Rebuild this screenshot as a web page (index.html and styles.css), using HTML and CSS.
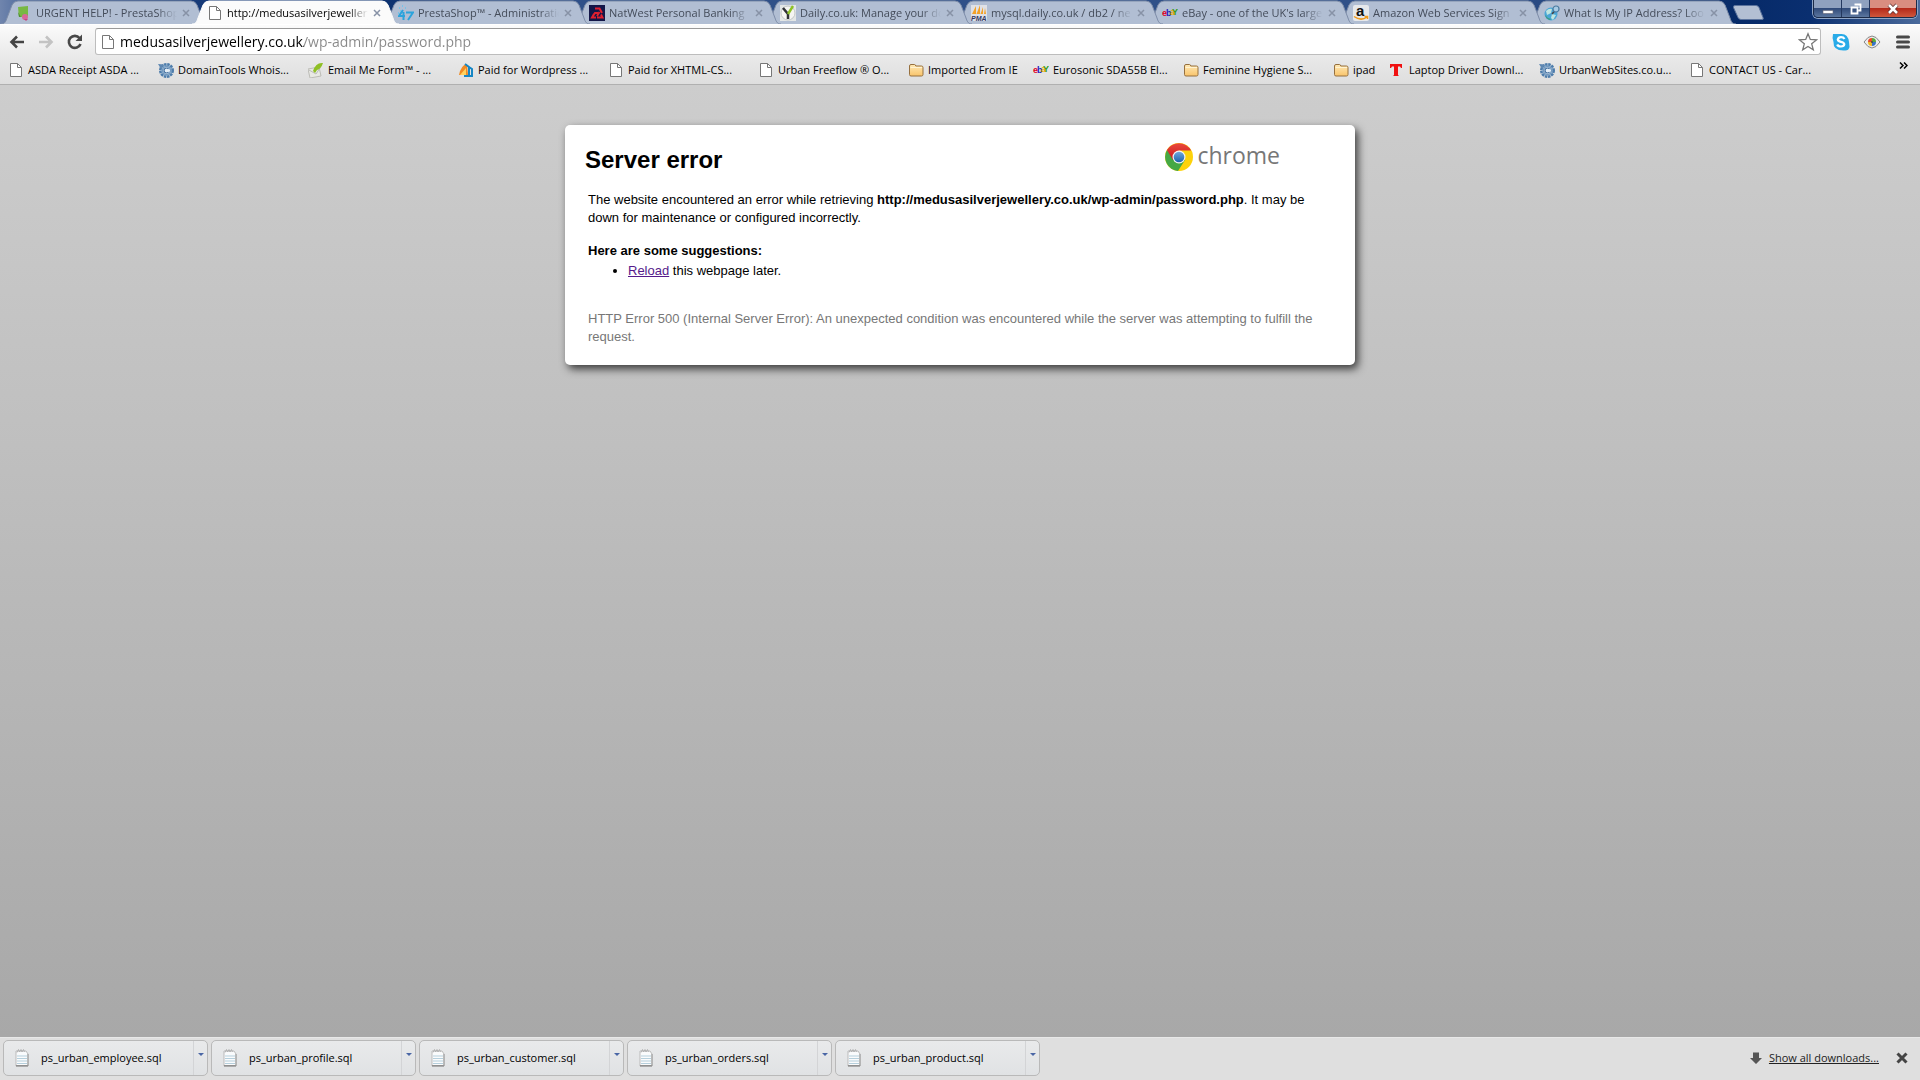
FILE: index.html
```html
<!DOCTYPE html>
<html lang="en">
<head>
<meta charset="utf-8">
<title>http://medusasilverjewellery.co.uk/wp-admin/password.php</title>
<link rel="stylesheet" href="styles.css">
</head>
<body>
<svg class="defs" aria-hidden="true">
  <defs>
    <linearGradient id="gFolder" x1="0" y1="0" x2="0" y2="1"><stop offset="0" stop-color="#ffe9b5"/><stop offset="1" stop-color="#f9c46b"/></linearGradient>
    <linearGradient id="gRed" x1="0" y1="0" x2="0" y2="1"><stop offset="0" stop-color="#ea4a3c"/><stop offset="1" stop-color="#c9151c"/></linearGradient>
    <linearGradient id="gBlue" x1="0" y1="0" x2="0" y2="1"><stop offset="0" stop-color="#6fa8dc"/><stop offset="1" stop-color="#1d62b0"/></linearGradient>
    <symbol id="tabShape" viewBox="0 0 207 24" preserveAspectRatio="none">
      <path d="M0 24C4 24 5 21 6 18L11 5Q13 1 17 1H190Q194 1 196 5L201 18C202 21 203 24 207 24" vector-effect="non-scaling-stroke"/>
    </symbol>
    <symbol id="page" viewBox="0 0 16 16"><path d="M2.5 1.5h7l4 4v9h-11z" fill="#fff" stroke="#777"/><path d="M9.500 1.500v4h4" fill="none" stroke="#777"/></symbol>
    <symbol id="folder" viewBox="0 0 16 16"><path d="M1.500 4Q1.500 2.500 3 2.500h3.500q1 0 1.300 1.500H13.500q1.500 0 1.500 1.500v7q0 1.500-1.500 1.500H3q-1.500 0-1.500-1.500z" fill="url(#gFolder)" stroke="#96703f"/><path d="M2.500 5.500h11.500" stroke="#fff3d2"/></symbol>
    <symbol id="gear" viewBox="0 0 16 16"><circle cx="8.500" cy="8.500" r="6" fill="#8fb0cf"/><circle cx="8.500" cy="8.500" r="6.300" fill="none" stroke="#4d7cab" stroke-width="2.400" stroke-dasharray="2.500 .8"/><circle cx="8.500" cy="8.500" r="4" fill="#e6eff7" stroke="#5b87b3"/><path d="M10.500 7a2.500 2.500 0 1 0 0 3" fill="none" stroke="#37679a" stroke-width="1.200"/><path d="M0 2l6 .5L3 7z" fill="#5e87b2"/></symbol>
    <symbol id="ebay" viewBox="0 0 16 16"><g font-family="Liberation Sans, sans-serif" font-weight="bold" font-size="9"><text x="0" y="11" fill="#e00020">e</text><text x="4" y="11" fill="#2222b8">b</text><text x="8" y="10" fill="#e8a800">a</text><text x="10" y="10" fill="#2f9a10">Y</text></g></symbol>
    <symbol id="notepad" viewBox="0 0 14 18"><path d="M1 2h10l2 3v12H1z" fill="#fafbfc" stroke="#bbb"/><path d="M2 7h10M2 9.500h10M2 12h10M2 14.500h10" stroke="#b5cfdc"/><path d="M1 16.800h12" stroke="#888" stroke-width="1.400"/><path d="M13 5v12" stroke="#999"/><path d="M2 3.500l1.500-3 1 2.500L6 .5 7 3l1.500-2.500 1 2.500" fill="none" stroke="#aaa" stroke-width=".8"/></symbol>
    <symbol id="x" viewBox="0 0 8 8"><path d="M1 1l6 6M7 1L1 7"/></symbol>
  </defs>
</svg>

<header class="chrome">
  <div class="titlebar">
    <nav class="tabs" aria-label="Tabs">
      <div class="tab t1"><svg class="shape"><use href="#tabShape"/></svg>
        <button class="title"><svg class="ico" viewBox="0 0 16 16"><path d="M2 2l10-1v10l-3 1H3z" fill="#78b843"/><path d="M2 7l3 5H3z" fill="#4f9230"/><circle cx="9" cy="12" r="3" fill="#d8669a"/><path d="M8 14h4l-2 2z" fill="#c8457f"/></svg><span>URGENT HELP! - PrestaShop</span></button>
        <button class="close" aria-label="Close tab"><svg><use href="#x"/></svg></button></div>
      <div class="tab active"><svg class="shape"><use href="#tabShape"/></svg>
        <button class="title"><svg class="ico"><use href="#page"/></svg><span>http://medusasilverjewellery</span></button>
        <button class="close" aria-label="Close tab"><svg><use href="#x"/></svg></button></div>
      <div class="tab t3"><svg class="shape"><use href="#tabShape"/></svg>
        <button class="title"><svg class="ico" viewBox="0 0 16 16"><path d="M5 5L1 11h6M5.500 7v8M8 7.500h7l-5 7.500" fill="none" stroke="#2ba3dc" stroke-width="2"/><path d="M1 3h1M4 1h1M7 3h1M2 6h1M0 8h1" stroke="#67c4ee" stroke-width="1.500"/></svg><span>PrestaShop™ - Administration</span></button>
        <button class="close" aria-label="Close tab"><svg><use href="#x"/></svg></button></div>
      <div class="tab t4"><svg class="shape"><use href="#tabShape"/></svg>
        <button class="title"><svg class="ico" viewBox="0 0 16 16"><path d="M0 0h16v16H0z" fill="#131648"/><path d="M6 3.500h4.500L13 8M10.500 7L8 11M3 12.500L6 8h3M12 9.500l1.500 3H8M5 9l-2 3.500h4" fill="none" stroke="#e0202f" stroke-width="2"/></svg><span>NatWest Personal Banking</span></button>
        <button class="close" aria-label="Close tab"><svg><use href="#x"/></svg></button></div>
      <div class="tab t5"><svg class="shape"><use href="#tabShape"/></svg>
        <button class="title"><svg class="ico" viewBox="0 0 16 16"><path d="M0 0h16v16H0z" fill="#e3e6e6"/><circle cx="8" cy="8" r="7" fill="#f5f5f2" stroke="#c2c7c7"/><path d="M3 3l5 6v5" fill="none" stroke="#303236" stroke-width="2.500"/><path d="M8 9l5-8" stroke="#8cc126" stroke-width="2.500"/></svg><span>Daily.co.uk: Manage your do</span></button>
        <button class="close" aria-label="Close tab"><svg><use href="#x"/></svg></button></div>
      <div class="tab t6"><svg class="shape"><use href="#tabShape"/></svg>
        <button class="title"><svg class="ico" viewBox="0 0 16 16"><path d="M0 0h16v16H0z" fill="#dfe1e6"/><path d="M5 1v8H1zM9 0v9H5.500zM12 2v7H9.500zM14 3l1 6h-2z" fill="#f3a128"/><text x="0" y="16" font-family="Liberation Sans, sans-serif" font-weight="bold" font-style="italic" font-size="7" fill="#333865">PMA</text></svg><span>mysql.daily.co.uk / db2 / ne</span></button>
        <button class="close" aria-label="Close tab"><svg><use href="#x"/></svg></button></div>
      <div class="tab t7"><svg class="shape"><use href="#tabShape"/></svg>
        <button class="title"><svg class="ico"><use href="#ebay"/></svg><span>eBay - one of the UK's large</span></button>
        <button class="close" aria-label="Close tab"><svg><use href="#x"/></svg></button></div>
      <div class="tab t8"><svg class="shape"><use href="#tabShape"/></svg>
        <button class="title"><svg class="ico" viewBox="0 0 16 16"><rect width="16" height="16" rx="2" fill="#e6e8eb"/><text x="3" y="11" font-family="Liberation Sans, sans-serif" font-weight="bold" font-size="15" fill="#111">a</text><path d="M1 11.500q7 5 13 .5M11.500 11.500h3v2.500" fill="none" stroke="#f09a1c" stroke-width="1.500"/></svg><span>Amazon Web Services Sign</span></button>
        <button class="close" aria-label="Close tab"><svg><use href="#x"/></svg></button></div>
      <div class="tab t9"><svg class="shape"><use href="#tabShape"/></svg>
        <button class="title"><svg class="ico" viewBox="0 0 16 16"><circle cx="7" cy="9" r="6.500" fill="#4aa6d6"/><path d="M2 6q3-3 6-2l-1 4-4 2zM8 9l4 1-3 5-2-2z" fill="#bfe5e0"/><path d="M1 10l3 3 3 1-1 1q-4-1-5-5z" fill="#3b9a78"/><path d="M8 9l2.500-3" stroke="#444" stroke-width="1.500"/><circle cx="12" cy="4" r="3" fill="#a9cbe4" stroke="#4b7ba0" stroke-width="1.200"/></svg><span>What Is My IP Address? Look</span></button>
        <button class="close" aria-label="Close tab"><svg><use href="#x"/></svg></button></div>
      <button class="newtab" aria-label="New tab"><svg viewBox="0 0 32 16"><path d="M3 .5h21q2 0 3 2l4 10q1 2-1 2H9q-2 0-3-2L1.500 2.500q-.5-2 1.500-2z" fill="#b3bfd3" stroke="#5b739d"/></svg></button>
    </nav>
    <div class="winctl">
      <button class="min" aria-label="Minimize"><svg viewBox="0 0 12 12"><path d="M1 7.500h10v3H1z" fill="#fff" stroke="#667" stroke-width=".6"/></svg></button>
      <button class="max" aria-label="Restore"><svg viewBox="0 0 12 12"><path d="M4.500 1.500h6v6h-2M1.500 4.500h6v6h-6z" fill="none" stroke="#fff" stroke-width="1.800"/></svg></button>
      <button class="exit" aria-label="Close"><svg viewBox="0 0 12 12"><path d="M2 2l8 8M10 2l-8 8" stroke="#5b2a2a" stroke-width="4"/><path d="M2 2l8 8M10 2l-8 8" stroke="#fff" stroke-width="2.600"/></svg></button>
    </div>
  </div>

  <div class="toolbar">
    <button class="tool" aria-label="Back"><svg viewBox="0 0 18 18"><path d="M16 9H4M9 3.500L3.500 9 9 14.500" fill="none" stroke="#444" stroke-width="2.600"/></svg></button>
    <button class="tool" aria-label="Forward"><svg viewBox="0 0 18 18"><path d="M2 9h12M9 3.500L14.500 9 9 14.500" fill="none" stroke="#c3c3c3" stroke-width="2.600"/></svg></button>
    <button class="tool" aria-label="Reload"><svg viewBox="0 0 18 18"><path d="M13.500 5A6 6 0 1 0 14.500 11" fill="none" stroke="#484848" stroke-width="2.600"/><path d="M16 1.500V8H9.500z" fill="#484848"/></svg></button>
    <div class="omnibox">
      <svg class="ico"><use href="#page"/></svg>
      <input type="text" aria-label="Address" value="medusasilverjewellery.co.uk/wp-admin/password.php">
      <button class="star" aria-label="Bookmark this page"><svg viewBox="0 0 20 20"><path d="M10 1.800l2.300 5.700 6.200.4-4.800 3.900 1.600 6L10 14.400l-5.300 3.400 1.600-6L1.500 7.900l6.200-.4z" fill="#fff" stroke="#777" stroke-width="1.300"/></svg></button>
    </div>
    <div class="ext">
      <button class="tool" aria-label="Skype"><svg viewBox="0 0 18 18"><path d="M1 1h7q8-1 9 8l.5 5q-1 4-5 3.500Q1 18 1.500 9 0 4 1 1z" fill="#29abe8"/><path d="M12.500 6Q11.500 4.200 9 4.200T5.800 6.500Q6 8.200 9 8.800t3.300 2.400Q12 13.500 9 13.500T5.200 11.500" fill="none" stroke="#fff" stroke-width="2.200"/></svg></button>
      <button class="tool" aria-label="Eye"><svg viewBox="0 0 18 18"><path d="M1 9q8-12 16 0-8 12-16 0z" fill="#ececec" stroke="#888"/><path d="M9 9V5a4 4 0 0 0-4 4z" fill="#e94b2b"/><path d="M9 9h4a4 4 0 0 0-4-4z" fill="#58a83a"/><path d="M9 9v4a4 4 0 0 0 4-4z" fill="#3a73c7"/><path d="M9 9H5a4 4 0 0 0 4 4z" fill="#efb820"/><circle cx="9" cy="9" r="1" fill="#444"/></svg></button>
      <button class="tool" aria-label="Menu"><svg viewBox="0 0 18 18"><path d="M3.500 4h11M3.500 9h11M3.500 14h11" stroke="#484848" stroke-width="3" stroke-linecap="round"/></svg></button>
    </div>
  </div>

  <nav class="bookmarks" aria-label="Bookmarks">
    <a href="#"><svg class="ico"><use href="#page"/></svg>ASDA Receipt ASDA ...</a>
    <a href="#"><svg class="ico"><use href="#gear"/></svg>DomainTools Whois...</a>
    <a href="#"><svg class="ico" viewBox="0 0 16 16"><path d="M0 7l11-2 2 9-11 2z" fill="#e9e9e4" stroke="#bcbcb6"/><path d="M1 8l7 4 4-6" fill="none" stroke="#bbb"/><path d="M5 9Q8 0 15 1q-2 6-6 7l-2 3z" fill="#8fbf24"/></svg>Email Me Form™ - ...</a>
    <a href="#"><svg class="ico" viewBox="0 0 16 16"><path d="M1 13Q3 3 9 2l1 11z" fill="#f08a24"/><path d="M2 13l6-7v7z" fill="#ffd25e"/><path d="M7 2l4 3v9H7M11 5l3 2v7H6" fill="none" stroke="#1686c4" stroke-width="2"/></svg>Paid for Wordpress ...</a>
    <a href="#"><svg class="ico"><use href="#page"/></svg>Paid for XHTML-CS...</a>
    <a href="#"><svg class="ico"><use href="#page"/></svg>Urban Freeflow ® O...</a>
    <a class="mid" href="#"><svg class="ico"><use href="#folder"/></svg>Imported From IE</a>
    <a href="#"><svg class="ico"><use href="#ebay"/></svg>Eurosonic SDA55B El...</a>
    <a href="#"><svg class="ico"><use href="#folder"/></svg>Feminine Hygiene S...</a>
    <a class="short" href="#"><svg class="ico"><use href="#folder"/></svg>ipad</a>
    <a href="#"><svg class="ico" viewBox="0 0 16 16"><path d="M1 2h12v4h-1l-1-1.500H9V13l1 1H4l1-1V4.500H3L2 6H1z" fill="#f01010"/></svg>Laptop Driver Downl...</a>
    <a href="#"><svg class="ico"><use href="#gear"/></svg>UrbanWebSites.co.u...</a>
    <a href="#"><svg class="ico"><use href="#page"/></svg>CONTACT US - Car...</a>
    <button class="more" aria-label="More bookmarks"><svg viewBox="0 0 9 7"><path d="M1 .5l3 3-3 3M5 .5l3 3-3 3" fill="none" stroke="#000" stroke-width="1.500"/></svg></button>
  </nav>
</header>

<main class="content">
  <section class="card">
    <div class="card-head">
      <h1>Server error</h1>
      <div class="logo">
        <svg viewBox="0 0 28 28"><circle cx="14" cy="14" r="14" fill="#fdd20a"/><path d="M14 14L2 7A14 14 0 0 0 13 28L20 17z" fill="#45a845"/><path d="M1.900 7A14 14 0 0 1 26.100 7.500H14L8 17z" fill="url(#gRed)"/><circle cx="14" cy="14" r="6.500" fill="#f4f4f4"/><circle cx="14" cy="14" r="5.300" fill="url(#gBlue)"/></svg>
        <span>chrome</span>
      </div>
    </div>
    <div class="card-body">
      <p>The website encountered an error while retrieving <strong>http://medusasilverjewellery.co.uk/wp-admin/password.php</strong>. It may be down for maintenance or configured incorrectly.</p>
      <h2>Here are some suggestions:</h2>
      <ul><li><a href="#">Reload</a> this webpage later.</li></ul>
      <p class="detail">HTTP Error 500 (Internal Server Error): An unexpected condition was encountered while the server was attempting to fulfill the request.</p>
    </div>
  </section>
</main>

<footer class="shelf">
  <div class="item"><button class="file"><svg><use href="#notepad"/></svg>ps_urban_employee.sql</button><button class="drop" aria-label="Options"></button></div>
  <div class="item"><button class="file"><svg><use href="#notepad"/></svg>ps_urban_profile.sql</button><button class="drop" aria-label="Options"></button></div>
  <div class="item"><button class="file"><svg><use href="#notepad"/></svg>ps_urban_customer.sql</button><button class="drop" aria-label="Options"></button></div>
  <div class="item"><button class="file"><svg><use href="#notepad"/></svg>ps_urban_orders.sql</button><button class="drop" aria-label="Options"></button></div>
  <div class="item"><button class="file"><svg><use href="#notepad"/></svg>ps_urban_product.sql</button><button class="drop" aria-label="Options"></button></div>
  <div class="all">
    <svg viewBox="0 0 12 12"><path d="M3 .5h6V6h3l-6 6-6-6h3z" fill="#555"/></svg>
    <a href="#">Show all downloads...</a>
    <button class="dismiss" aria-label="Close downloads bar"><svg><use href="#x"/></svg></button>
  </div>
</footer>
</body>
</html>
```
FILE: styles.css
```css
* { box-sizing: border-box; }
body {
  margin: 0;
  min-height: 100vh;
  display: flex;
  flex-direction: column;
  font: 11px/16px "Open Sans", "Noto Sans", sans-serif;
  color: #000;
}
button { border: 0; padding: 0; margin: 0; background: none; font: inherit; color: inherit; }
svg { display: block; flex: none; }
.defs { position: absolute; width: 0; height: 0; }
.ico { width: 16px; height: 16px; }

/* Title bar and tabs */
.titlebar {
  display: flex;
  justify-content: space-between;
  height: 24px;
  background: linear-gradient(90deg, #7085ad 0, #5570a0 20px, #163a78 200px, #0d3270 400px, #2f5088 480px, #2f5088 1500px, #062a68 1740px, #0a2f70 1810px, #4b6b9c 100%);
}
.tabs { display: flex; flex: 1; padding-left: 1px; min-width: 0; }
.tab {
  position: relative;
  display: flex;
  align-items: center;
  gap: 4px;
  flex: 0 1 207px;
  min-width: 0;
  margin-right: -16px;
  padding: 2px 17px 0 15px;
  color: #444c5a;
}
.shape {
  position: absolute;
  inset: 0;
  width: 100%;
  height: 24px;
  fill: #b1bed3;
  stroke: #7d8ca8;
  stroke-width: 1;
}
.t1 { z-index: 9; }
.active { z-index: 10; color: #000; }
.t3 { z-index: 7; }
.t4 { z-index: 6; }
.t5 { z-index: 5; }
.t6 { z-index: 4; }
.t7 { z-index: 3; }
.t8 { z-index: 2; }
.t9 { z-index: 1; }
.active .shape { fill: #fbfbfb; stroke: #fbfbfb; }
.title {
  position: relative;
  display: flex;
  align-items: center;
  gap: 4px;
  flex: 1;
  min-width: 0;
  text-align: left;
}
.title span {
  flex: 1;
  overflow: hidden;
  white-space: nowrap;
  mask-image: linear-gradient(90deg, #000 calc(100% - 20px), transparent);
}
.close { position: relative; width: 10px; height: 16px; display: grid; place-items: center; }
.close svg { width: 8px; height: 8px; stroke: #8792a6; stroke-width: 1.500; }
.newtab { margin: 5px 0 0 12px; align-self: flex-start; }
.newtab svg { width: 32px; height: 16px; }
.winctl {
  display: flex;
  height: 18px;
  margin-right: 3px;
  border: 1px solid #1c2b48;
  border-top: 0;
  border-radius: 0 0 5px 5px;
  overflow: hidden;
  box-shadow: 0 0 0 1px #8fa5c6;
}
.winctl button { display: grid; place-items: center; width: 28px; background: linear-gradient(#8fa1bf 45%, #314b7a 50%, #5c779f); border-right: 1px solid #24385f; }
.winctl .exit { width: 46px; border-right: 0; background: linear-gradient(#d98d80 45%, #b52a1a 50%, #d0573c); }
.winctl svg { width: 12px; height: 12px; }

/* Toolbar */
.toolbar {
  display: flex;
  align-items: center;
  gap: 11px;
  height: 35px;
  padding: 0 8px 1px;
  background: linear-gradient(#fbfbfb, #e8e8e8);
  border-top: 1px solid #fff;
}
.tool svg { width: 18px; height: 18px; }
.omnibox {
  display: flex;
  align-items: center;
  gap: 4px;
  flex: 1;
  height: 27px;
  padding: 0 2px 0 4px;
  background: #fff;
  border: 1px solid #bdbdbd;
  border-top-color: #999;
  border-radius: 3px;
}
.omnibox input {
  flex: 1;
  min-width: 0;
  height: 24px;
  padding: 0;
  border: 0;
  outline: 0;
  font: 14px/20px "Open Sans", "Noto Sans", sans-serif;
  color: #000;
  background: linear-gradient(90deg, #000 184px, #888 184px);
  background-clip: text;
  -webkit-background-clip: text;
  -webkit-text-fill-color: transparent;
}
.star svg { width: 20px; height: 20px; }
.ext { display: flex; gap: 13px; }

/* Bookmarks bar */
.bookmarks {
  display: flex;
  height: 26px;
  padding: 0 12px 4px 8px;
  background: linear-gradient(#e8e8e8, #dedede);
  border-bottom: 1px solid #b0b0b0;
}
.bookmarks a {
  display: flex;
  align-items: center;
  gap: 4px;
  flex: 0 1 150px;
  white-space: nowrap;
  color: #000;
  text-decoration: none;
}
.bookmarks .mid { flex-basis: 125px; }
.bookmarks .short { flex-basis: 56px; }
.more { margin-left: auto; align-self: flex-start; padding-top: 3px; }
.more svg { width: 9px; height: 7px; }

/* Error page */
.content {
  flex: 1;
  padding: 40px 20px;
  background: linear-gradient(#cdcdcd, #a8a8a8);
  font: 13px/18px "Liberation Sans", Arial, sans-serif;
}
.card {
  max-width: 790px;
  margin: 0 auto;
  padding: 18px 20px 19px;
  background: #fff;
  border-radius: 5px;
  box-shadow: 3px 4px 8px rgba(0, 0, 0, 0.7);
}
.card-head { display: flex; justify-content: space-between; }
.card-head h1 { margin: 2px 0 0; font-size: 24px; line-height: 30px; }
.logo { display: flex; align-items: center; gap: 4px; height: 28px; margin-right: 55px; }
.logo svg { width: 28px; height: 28px; }
.logo span { padding-bottom: 4px; font: 23px/24px "Open Sans", "Noto Sans", sans-serif; color: #777; }
.card-body { padding: 16px 20px 0 3px; }
.card-body p { margin: 0; }
.card-body h2 { margin: 15px 0 0; font-size: 13px; line-height: 18px; }
.card-body ul { margin: 2px 0 0; padding-left: 40px; }
.card-body a { color: #551a8b; }
.card-body .detail { margin: 30px 0 0; color: #777; }

/* Downloads shelf */
.shelf {
  display: flex;
  align-items: center;
  gap: 3px;
  height: 43px;
  padding: 0 12px 2px 3px;
  background: #dfdfdf;
  border-top: 1px solid #e8e8e8;
}
.item {
  display: flex;
  flex: 0 1 205px;
  height: 36px;
  border: 1px solid #b9b9b9;
  border-radius: 5px;
  background: linear-gradient(#e9eaeb, #e0e2e4);
}
.file { display: flex; align-items: center; gap: 12px; flex: 1; padding-left: 11px; white-space: nowrap; }
.file svg { width: 14px; height: 18px; }
.drop { width: 14px; border-left: 1px solid #d3d4d6; display: flex; justify-content: center; padding-top: 12px; }
.drop::before { content: ""; border: 3px solid transparent; border-top-color: #4a66a5; }
.all { display: flex; align-items: center; gap: 7px; margin-left: auto; }
.all > svg { width: 12px; height: 12px; }
.all a { color: #222; }
.dismiss { margin-left: 10px; }
.dismiss svg { width: 12px; height: 12px; stroke: #444; stroke-width: 2; }
```
